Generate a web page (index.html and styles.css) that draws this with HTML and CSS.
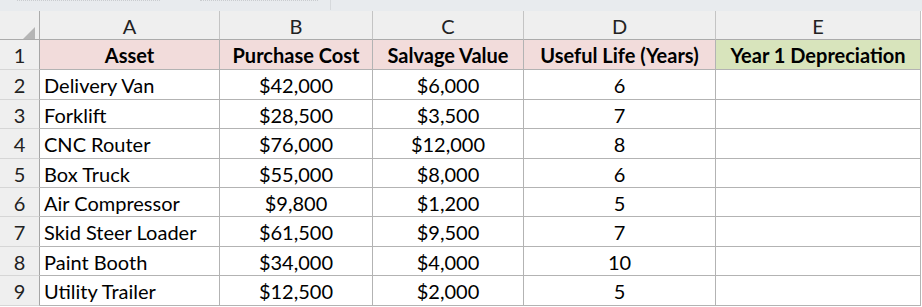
FILE: index.html
```html
<!DOCTYPE html>
<html lang="en">
<head>
<meta charset="utf-8">
<title>Depreciation Sheet</title>
<link rel="stylesheet" href="styles.css">
</head>
<body>
<div class="topbar">
  <span class="dots dots-a"></span>
  <span class="dots dots-b"></span>
  <span class="divider"></span>
</div>
<div class="sheet">
  <div class="corner"><span class="tri"></span></div>
  <div class="colhead">A</div>
  <div class="colhead">B</div>
  <div class="colhead">C</div>
  <div class="colhead">D</div>
  <div class="colhead">E</div>

  <div class="rowhead">1</div>
  <div class="cell hdr pink">Asset</div>
  <div class="cell hdr pink">Purchase Cost</div>
  <div class="cell hdr pink">Salvage Value</div>
  <div class="cell hdr pink">Useful Life (Years)</div>
  <div class="cell hdr green">Year 1 Depreciation</div>

  <div class="rowhead">2</div>
  <div class="cell left">Delivery Van</div>
  <div class="cell">$42,000</div>
  <div class="cell">$6,000</div>
  <div class="cell">6</div>
  <div class="cell"></div>

  <div class="rowhead">3</div>
  <div class="cell left">Forklift</div>
  <div class="cell">$28,500</div>
  <div class="cell">$3,500</div>
  <div class="cell">7</div>
  <div class="cell"></div>

  <div class="rowhead">4</div>
  <div class="cell left">CNC Router</div>
  <div class="cell">$76,000</div>
  <div class="cell">$12,000</div>
  <div class="cell">8</div>
  <div class="cell"></div>

  <div class="rowhead">5</div>
  <div class="cell left">Box Truck</div>
  <div class="cell">$55,000</div>
  <div class="cell">$8,000</div>
  <div class="cell">6</div>
  <div class="cell"></div>

  <div class="rowhead">6</div>
  <div class="cell left">Air Compressor</div>
  <div class="cell">$9,800</div>
  <div class="cell">$1,200</div>
  <div class="cell">5</div>
  <div class="cell"></div>

  <div class="rowhead">7</div>
  <div class="cell left">Skid Steer Loader</div>
  <div class="cell">$61,500</div>
  <div class="cell">$9,500</div>
  <div class="cell">7</div>
  <div class="cell"></div>

  <div class="rowhead">8</div>
  <div class="cell left">Paint Booth</div>
  <div class="cell">$34,000</div>
  <div class="cell">$4,000</div>
  <div class="cell">10</div>
  <div class="cell"></div>

  <div class="rowhead">9</div>
  <div class="cell left">Utility Trailer</div>
  <div class="cell">$12,500</div>
  <div class="cell">$2,000</div>
  <div class="cell">5</div>
  <div class="cell"></div>
</div>
</body>
</html>
```
FILE: styles.css
```css
html, body {
  margin: 0;
  padding: 0;
  background: #ffffff;
}
body {
  font-family: Lato, "Liberation Sans", sans-serif;
  font-size: 20px;
  color: #000;
}
.topbar {
  height: 11px;
  background: #e8ebee;
  display: flex;
  align-items: flex-start;
}
.dots {
  height: 1px;
  border-top: 1px dotted #c9cccf;
}
.dots-a { margin-left: 17px; width: 143px; }
.dots-b { margin-left: 40px; width: 118px; }
.divider {
  margin-left: 12px;
  width: 1px;
  height: 10px;
  background: #d6d9dc;
}
.sheet {
  display: grid;
  grid-template-columns: 40px 180px 153px 151px 192px 205px;
  grid-template-rows: 29px 30px 30px 29px 30px 29px 29px 30px 29px 30px;
}
.sheet > div {
  box-sizing: border-box;
  display: flex;
  align-items: center;
  justify-content: center;
  padding-top: 1px;
  white-space: nowrap;
  overflow: hidden;
}
.corner {
  background: #efefef;
  border-right: 1px solid #ababab;
  border-bottom: 1px solid #ababab;
  position: relative;
}
.tri {
  position: absolute;
  left: 16px;
  top: 16px;
  width: 0;
  height: 0;
  border-left: 19px solid transparent;
  border-bottom: 19px solid #b5b5b5;
}
.colhead {
  background: #efefef;
  border-right: 1px solid #c4c4c4;
  border-bottom: 1px solid #ababab;
  color: #222;
}
.rowhead {
  background: #efefef;
  border-right: 1px solid #a6a6a6;
  border-bottom: 1px solid #d6d6d6;
  color: #222;
}
.cell {
  border-right: 1px solid #b3b3b3;
  border-bottom: 1px solid #b3b3b3;
}
.cell.left {
  justify-content: flex-start;
  padding-left: 4px;
}
.hdr {
  font-weight: 700;
}
.pink { background: #f2dcdb; }
.green { background: #d8e4bc; }
```
